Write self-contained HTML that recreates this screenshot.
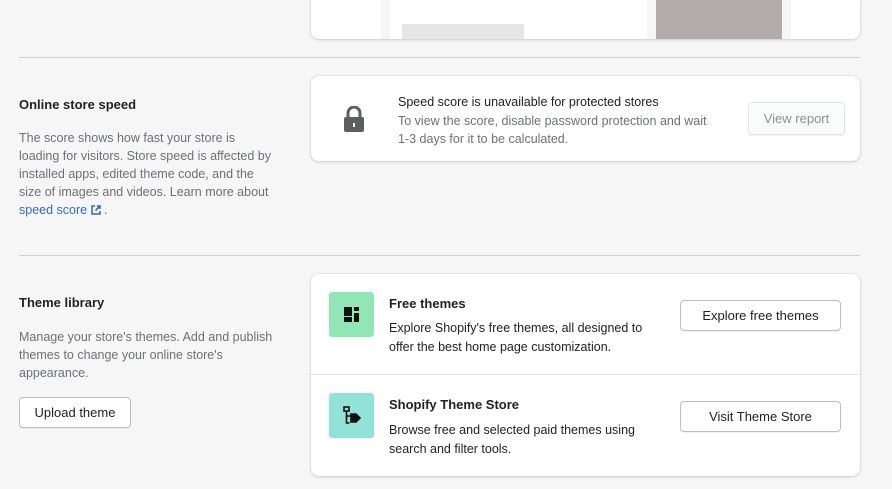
<!DOCTYPE html>
<html><head><meta charset="utf-8"><style>
*{box-sizing:border-box;margin:0;padding:0}
body{width:892px;height:489px;background:#f6f6f7;font-family:"Liberation Sans",sans-serif;color:#202223;position:relative;overflow:hidden;font-size:12.5px;letter-spacing:0}
.a{position:absolute;white-space:nowrap}
.card{position:absolute;background:#fff;border-radius:8px;box-shadow:0 0 0 1px rgba(63,63,68,.05),0 1px 3px rgba(63,63,68,.18)}
.hr{position:absolute;left:19px;width:841px;height:1px;background:#d0d0d0}
.h{font-size:13px;font-weight:bold;letter-spacing:0}
.sub{color:#6d7175;line-height:18px}
.btn{position:absolute;border:1px solid #babfc3;border-radius:4px;background:#fff;font-size:13px;display:flex;align-items:center;justify-content:center;box-shadow:0 1px 0 rgba(0,0,0,.05)}
</style></head><body>
<div class="card" style="left:311px;top:-10px;width:549px;height:49px;overflow:hidden">
 <div style="position:absolute;left:70px;top:0;width:9px;height:49px;background:#f6f6f7"></div>
 <div style="position:absolute;left:91px;top:34px;width:122px;height:15px;background:#e6e6e6"></div>
 <div style="position:absolute;left:336px;top:0;width:9px;height:49px;background:#f6f6f7"></div>
 <div style="position:absolute;left:345px;top:0;width:126px;height:49px;background:#b1acab"></div>
 <div style="position:absolute;left:471px;top:0;width:9px;height:49px;background:#f6f6f7"></div>
</div>
<div class="hr" style="top:57px"></div>
<div class="a h" style="left:19px;top:97px">Online store speed</div>
<div class="a sub" style="left:19px;top:129px">The score shows how fast your store is<br>loading for visitors. Store speed is affected by<br>installed apps, edited theme code, and the<br>size of images and videos. Learn more about<br><span style="color:#2c6ecb">speed score <svg width="10" height="10" viewBox="0 0 10 10" style="vertical-align:-1px"><path d="M4 1H1v8h8V6M6 1h3v3M9 1L4.5 5.5" fill="none" stroke="#2c6ecb" stroke-width="1.6"/></svg></span> .</div>
<div class="card" style="left:311px;top:76px;width:549px;height:85px">
 <svg class="a" style="left:31px;top:30px" width="24" height="26" viewBox="0 0 24 26"><path d="M6 11V7a6 6 0 0 1 12 0v4" fill="none" stroke="#5c5f62" stroke-width="3"/><rect x="2" y="11" width="20" height="15" rx="2" fill="#5c5f62"/><rect x="11" y="17" width="2" height="4" fill="#fff"/></svg>
 <div class="a" style="left:87px;top:17px;line-height:18.5px">Speed score is unavailable for protected stores<br><span style="color:#6d7175">To view the score, disable password protection and wait<br>1-3 days for it to be calculated.</span></div>
 <div class="btn" style="left:437px;top:26px;width:97px;height:33px;color:#8c9196;border-color:#e1e3e5;background:#fafbfb">View report</div>
</div>
<div class="hr" style="top:255px"></div>
<div class="a h" style="left:19px;top:295px">Theme library</div>
<div class="a sub" style="left:19px;top:328px">Manage your store's themes. Add and publish<br>themes to change your online store's<br>appearance.</div>
<div class="btn" style="left:19px;top:397px;width:112px;height:31px">Upload theme</div>
<div class="card" style="left:311px;top:274px;width:549px;height:202px">
 <div class="a" style="left:18px;top:18px;width:45px;height:45px;background:#92e6b5;border-radius:3px"></div>
 <svg class="a" style="left:33px;top:33px" width="15" height="15" viewBox="0 0 15 15" fill="#111"><rect x="0" y="0" width="8" height="9"/><rect x="0" y="10" width="8" height="5"/><rect x="10" y="0" width="5" height="4"/><rect x="10" y="6" width="5" height="9"/></svg>
 <div class="a h" style="left:78px;top:22px">Free themes</div>
 <div class="a" style="left:78px;top:45px;line-height:19px;color:#202223">Explore Shopify's free themes, all designed to<br>offer the best home page customization.</div>
 <div class="btn" style="left:369px;top:26px;width:161px;height:31px">Explore free themes</div>
 <div class="a" style="left:0;top:100px;width:549px;height:1px;background:#e1e3e5"></div>
 <div class="a" style="left:18px;top:119px;width:45px;height:45px;background:#92e2d7;border-radius:3px"></div>
 <svg class="a" style="left:32px;top:132px" width="18" height="20" viewBox="0 0 18 20" fill="none" stroke="#111" stroke-width="1.6"><rect x="1" y="1" width="5" height="4"/><path d="M3.5 5v12h3M3.5 10h4"/><path d="M8 8h5l4 4-4 4H8z" fill="#111"/></svg>
 <div class="a h" style="left:78px;top:123px">Shopify Theme Store</div>
 <div class="a" style="left:78px;top:147px;line-height:19px">Browse free and selected paid themes using<br>search and filter tools.</div>
 <div class="btn" style="left:369px;top:127px;width:161px;height:31px">Visit Theme Store</div>
</div>
</body></html>
